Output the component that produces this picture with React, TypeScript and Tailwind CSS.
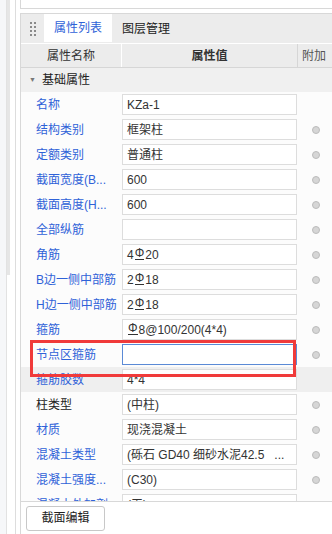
import React from "react";

type Row = {
  label: string;
  value: React.ReactNode;
  black?: boolean;
  dot?: boolean;
  focus?: boolean;
  shaded?: boolean;
};

// 三级钢符号
const Gang = () => (
  <span className="inline-block leading-[12px] text-[12px] border-b border-[#333] mx-[1px] relative top-[-1px]">Φ</span>
);

const rows: Row[] = [
  { label: "名称", value: "KZa-1" },
  { label: "结构类别", value: "框架柱", dot: true },
  { label: "定额类别", value: "普通柱", dot: true },
  { label: "截面宽度(B...", value: "600", dot: true },
  { label: "截面高度(H...", value: "600", dot: true },
  { label: "全部纵筋", value: "", dot: true },
  { label: "角筋", value: <>4<Gang />20</>, dot: true },
  { label: "B边一侧中部筋", value: <>2<Gang />18</>, dot: true },
  { label: "H边一侧中部筋", value: <>2<Gang />18</>, dot: true },
  { label: "箍筋", value: <><Gang />8@100/200(4*4)</>, dot: true },
  { label: "节点区箍筋", value: "", dot: true, focus: true },
  { label: "箍筋胶数", value: "4*4", shaded: true },
  { label: "柱类型", value: "(中柱)", black: true, dot: true },
  { label: "材质", value: "现浇混凝土", dot: true },
  { label: "混凝土类型", value: <>(砾石 GD40 细砂水泥42.5 &nbsp;&nbsp;...</>, dot: true },
  { label: "混凝土强度...", value: "(C30)", dot: true },
  { label: "混凝土外加剂", value: "(无)", dot: true },
];

export default function App() {
  return (
    <div
      className="w-[332px] h-[534px] flex bg-white overflow-hidden text-[12px] text-[#333]"
      style={{ fontFamily: '"Liberation Sans", "Noto Sans CJK SC", sans-serif' }}
    >
      {/* 左侧窄条 */}
      <div className="w-[20px] flex shrink-0">
        <div className="w-[7px] bg-[#f6f7f9] border-r border-[#e2e2e2]" />
        <div className="w-[9px] bg-white border-r border-[#dddddd] flex flex-col">
          <div className="w-[3px] h-[275px] bg-[#e6e6e6]" />
        </div>
        <div className="w-[4px] bg-white" />
      </div>

      <div className="flex-1 flex flex-col min-w-0">
        {/* 上方面板残余 */}
        <div className="h-[9px] border-l border-b border-[#d8d8d8] bg-white shrink-0" />
        <div className="h-[4px] shrink-0" />

        {/* 属性面板 */}
        <div className="flex-1 flex flex-col border-l border-t border-[#d8d8d8] min-h-0">
          {/* 标签页 */}
          <div className="h-[29px] bg-[#ececec] flex items-stretch shrink-0">
            <div className="w-[23px] flex items-center justify-center">
              <div className="grid grid-cols-2 gap-x-[2px] gap-y-[2px]">
                {Array.from({ length: 8 }).map((_, i) => (
                  <div key={i} className="w-[2px] h-[2px] bg-[#8a8a8a]" />
                ))}
              </div>
            </div>
            <div className="w-[68px] bg-white text-[#2f62d8] flex items-center justify-center mb-[1px]">属性列表</div>
            <div className="px-[10px] flex items-center text-[#222]">图层管理</div>
          </div>

          {/* 表头 */}
          <div className="h-[25px] bg-[#ececec] border-t border-white border-b border-b-[#d6d6d6] flex items-stretch shrink-0">
            <div className="w-[101px] flex items-center justify-center border-r border-white">属性名称</div>
            <div className="w-[176px] flex items-center justify-center font-bold border-r border-[#d6d6d6]">属性值</div>
            <div className="flex-1 flex items-center pl-[4px] text-[#555]">附加</div>
          </div>

          {/* 属性列表内容 */}
          <div className="flex-1 relative overflow-hidden bg-[#fcfcfc] border-b border-[#d8d8d8]">
            <div className="h-[24px] bg-[#f0f0f0] flex items-center pl-[8px] gap-[6px]">
              <span className="text-[7px] text-[#777]">▼</span>
              <span className="text-[#222]">基础属性</span>
            </div>
            {rows.map((r, i) => (
              <div key={i} className={`h-[25px] flex items-center ${r.shaded ? "bg-[#efefef]" : ""}`}>
                <div
                  className={`w-[101px] pl-[15px] whitespace-nowrap overflow-hidden ${r.black ? "text-[#222]" : "text-[#2f62d8]"}`}
                >
                  {r.label}
                </div>
                <div
                  className={`w-[175px] h-[21px] bg-white border flex items-center px-[4px] whitespace-nowrap overflow-hidden ${r.focus ? "border-[#5b8ad6]" : "border-[#dddddd]"}`}
                >
                  {r.value}
                </div>
                <div className="flex-1 flex justify-center pl-[2px]">
                  {r.dot && <div className="w-[8px] h-[8px] rounded-full bg-[#d6d6d6] border border-[#bcbcbc]" />}
                </div>
              </div>
            ))}

            {/* 红色标注框 */}
            <div className="absolute left-[9px] top-[272px] w-[266px] h-[37px] border-[3px] border-[#f03a3a]" />
          </div>

          {/* 底部按钮 */}
          <div className="h-[32px] bg-white flex items-center pl-[5px] shrink-0">
            <button className="w-[79px] h-[25px] border border-[#c8c8c8] rounded-[3px] bg-white text-[#222]">截面编辑</button>
          </div>
        </div>
      </div>
    </div>
  );
}
